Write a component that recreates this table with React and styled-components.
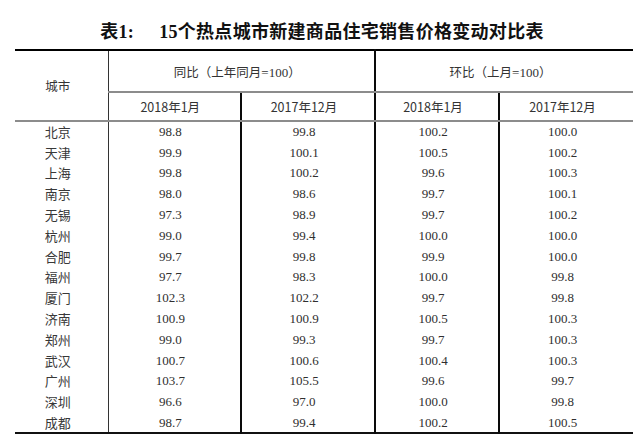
import React from "react";
import styled, { createGlobalStyle } from "styled-components";

const Global = createGlobalStyle`
  html, body { margin: 0; padding: 0; background: #fff; }
  body {
    font-family: "Liberation Serif", "Noto Sans CJK SC", serif;
    -webkit-font-smoothing: antialiased;
  }
`;

const Page = styled.div`
  width: 640px;
  height: 437px;
  overflow: hidden;
  padding-left: 15px;
  box-sizing: border-box;
`;

const Title = styled.h1`
  margin: 0;
  width: 618px;
  height: 49px;
  display: flex;
  align-items: flex-end;
  justify-content: center;
  gap: 25px;
  padding-bottom: 6px;
  padding-right: 4px;
  box-sizing: border-box;
  font-family: "Liberation Serif", "Noto Sans CJK SC", serif;
  font-weight: 700;
  font-size: 18px;
  line-height: 22px;
  color: #111;
  letter-spacing: 0.3px;
`;

const Table = styled.table`
  width: 618px;
  table-layout: fixed;
  border-collapse: collapse;
  border-top: 2px solid #000;
  border-bottom: 2px solid #111;
`;

const HeadRow = styled.tr`
  height: ${(p) => p.$h}px;
`;

const Th = styled.th`
  padding: 0 ${(p) => (p.$pr ?? 8)}px 0 0;
  font-weight: 400;
  font-size: 12.5px;
  color: #333;
  font-family: "Noto Sans CJK SC", "Liberation Sans", sans-serif;
  text-align: center;
  vertical-align: middle;
  border-right: ${(p) => p.$rb || "none"};
  border-bottom: ${(p) => p.$bb || "none"};
`;

const Eq = styled.span`
  font-family: "Liberation Serif", serif;
  font-size: 13px;
`;

const Row = styled.tr`
  height: 20.8px;
`;

const City = styled.td`
  padding: 0 7px 0 0;
  text-align: center;
  font-family: "Noto Sans CJK SC", sans-serif;
  font-size: 13px;
  color: #383838;
  line-height: 1;
  border-right: 1px solid #333;
`;

const Num = styled.td`
  padding: 0 8px 0 0;
  text-align: center;
  font-family: "Liberation Serif", serif;
  font-size: 13px;
  color: #2f2f2f;
  line-height: 1;
  border-right: ${(p) => p.$rb || "none"};
`;

const GRAY = "2px solid #8c8c8c";
const THICK = "2px solid #0a0a0a";

const rows = [
  ["北京", "98.8", "99.8", "100.2", "100.0"],
  ["天津", "99.9", "100.1", "100.5", "100.2"],
  ["上海", "99.8", "100.2", "99.6", "100.3"],
  ["南京", "98.0", "98.6", "99.7", "100.1"],
  ["无锡", "97.3", "98.9", "99.7", "100.2"],
  ["杭州", "99.0", "99.4", "100.0", "100.0"],
  ["合肥", "99.7", "99.8", "99.9", "100.0"],
  ["福州", "97.7", "98.3", "100.0", "99.8"],
  ["厦门", "102.3", "102.2", "99.7", "99.8"],
  ["济南", "100.9", "100.9", "100.5", "100.3"],
  ["郑州", "99.0", "99.3", "99.7", "100.3"],
  ["武汉", "100.7", "100.6", "100.4", "100.3"],
  ["广州", "103.7", "105.5", "99.6", "99.7"],
  ["深圳", "96.6", "97.0", "100.0", "99.8"],
  ["成都", "98.7", "99.4", "100.2", "100.5"],
];

export default function App() {
  return (
    <Page lang="zh-CN">
      <Global />
      <Title>
        <span>表1:</span>
        <span>15个热点城市新建商品住宅销售价格变动对比表</span>
      </Title>
      <Table>
        <colgroup>
          <col style={{ width: 93 }} />
          <col style={{ width: 133 }} />
          <col style={{ width: 134 }} />
          <col style={{ width: 124 }} />
          <col style={{ width: 134 }} />
        </colgroup>
        <thead>
          <HeadRow $h={42}>
            <Th rowSpan={2} $pr={7} $rb="1px solid #333" $bb={GRAY}>
              城市
            </Th>
            <Th colSpan={2} $rb={THICK} $bb={GRAY}>
              同比（上年同月<Eq>=100</Eq>）
            </Th>
            <Th colSpan={2} $bb={GRAY}>
              环比（上月<Eq>=100</Eq>）
            </Th>
          </HeadRow>
          <HeadRow $h={29}>
            <Th $rb={THICK} $bb={GRAY}>2018年1月</Th>
            <Th $rb={THICK} $bb={GRAY}>2017年12月</Th>
            <Th $rb={THICK} $bb={GRAY}>2018年1月</Th>
            <Th $bb={GRAY}>2017年12月</Th>
          </HeadRow>
        </thead>
        <tbody>
          {rows.map((r) => (
            <Row key={r[0]}>
              <City>{r[0]}</City>
              <Num $rb={THICK}>{r[1]}</Num>
              <Num $rb={THICK}>{r[2]}</Num>
              <Num $rb={THICK}>{r[3]}</Num>
              <Num>{r[4]}</Num>
            </Row>
          ))}
        </tbody>
      </Table>
    </Page>
  );
}
